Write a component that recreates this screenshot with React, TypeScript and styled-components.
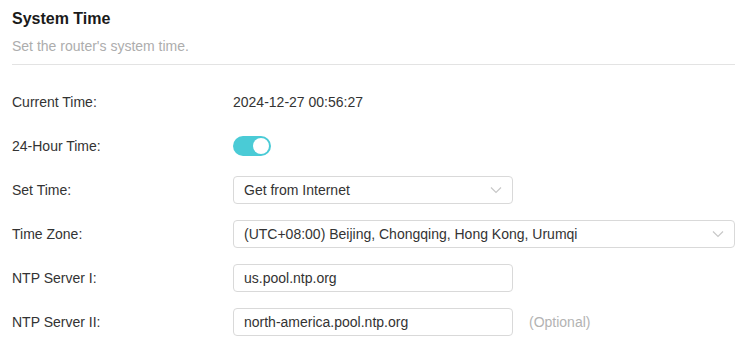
import React from "react";
import styled, { createGlobalStyle } from "styled-components";

const GlobalStyle = createGlobalStyle`
  html, body { margin: 0; padding: 0; background: #fff; }
  body { font-family: "Liberation Sans", Arial, sans-serif; color: #333; }
`;

const Page = styled.div`
  padding: 6px 6px 0 12px;
`;

const Header = styled.div`
  border-bottom: 1px solid #e3e3e3;
  padding-bottom: 9px;
`;

const Title = styled.h2`
  margin: 0;
  font-size: 16px;
  font-weight: bold;
  color: #1a1a1a;
  line-height: 26px;
`;

const Subtitle = styled.p`
  margin: 6px 0 0;
  font-size: 14px;
  color: #adadad;
  line-height: 17px;
`;

const Form = styled.div`
  display: flex;
  flex-direction: column;
  gap: 16px;
  padding-top: 23px;
`;

const Row = styled.div`
  display: flex;
  align-items: center;
  height: 28px;
`;

const Label = styled.div`
  width: 221px;
  flex: none;
  font-size: 14px;
  color: #333;
`;

const Value = styled.div`
  font-size: 14px;
  color: #333;
`;

const Toggle = styled.div<{ $on: boolean }>`
  width: 38px;
  height: 20px;
  border-radius: 10px;
  background: ${(p) => (p.$on ? "#4acbd6" : "#ccc")};
  display: flex;
  align-items: center;
  justify-content: ${(p) => (p.$on ? "flex-end" : "flex-start")};
  padding: 0 2px;
  box-sizing: border-box;
`;

const Knob = styled.div`
  width: 16px;
  height: 16px;
  border-radius: 50%;
  background: #fff;
`;

const Field = styled.div<{ $wide?: boolean }>`
  box-sizing: border-box;
  width: ${(p) => (p.$wide ? "502px" : "280px")};
  height: 28px;
  border: 1px solid #d9d9d9;
  border-radius: 4px;
  display: flex;
  align-items: center;
  justify-content: space-between;
  padding: 0 10px 0 10px;
  font-size: 14px;
  color: #333;
`;

const Hint = styled.span`
  margin-left: 16px;
  font-size: 14px;
  color: #b3b3b3;
`;

const Chevron = () => (
  <svg width="12" height="8" viewBox="0 0 12 8" fill="none">
    <path d="M1 1.5L6 6.5L11 1.5" stroke="#c8c8c8" strokeWidth="1.2" />
  </svg>
);

export default function App() {
  return (
    <>
      <GlobalStyle />
      <Page>
        <Header>
          <Title>System Time</Title>
          <Subtitle>Set the router's system time.</Subtitle>
        </Header>
        <Form>
          <Row>
            <Label>Current Time:</Label>
            <Value>2024-12-27 00:56:27</Value>
          </Row>
          <Row>
            <Label>24-Hour Time:</Label>
            <Toggle $on>
              <Knob />
            </Toggle>
          </Row>
          <Row>
            <Label>Set Time:</Label>
            <Field>
              <span>Get from Internet</span>
              <Chevron />
            </Field>
          </Row>
          <Row>
            <Label>Time Zone:</Label>
            <Field $wide>
              <span>(UTC+08:00) Beijing, Chongqing, Hong Kong, Urumqi</span>
              <Chevron />
            </Field>
          </Row>
          <Row>
            <Label>NTP Server I:</Label>
            <Field>
              <span>us.pool.ntp.org</span>
            </Field>
          </Row>
          <Row>
            <Label>NTP Server II:</Label>
            <Field>
              <span>north-america.pool.ntp.org</span>
            </Field>
            <Hint>(Optional)</Hint>
          </Row>
        </Form>
      </Page>
    </>
  );
}
